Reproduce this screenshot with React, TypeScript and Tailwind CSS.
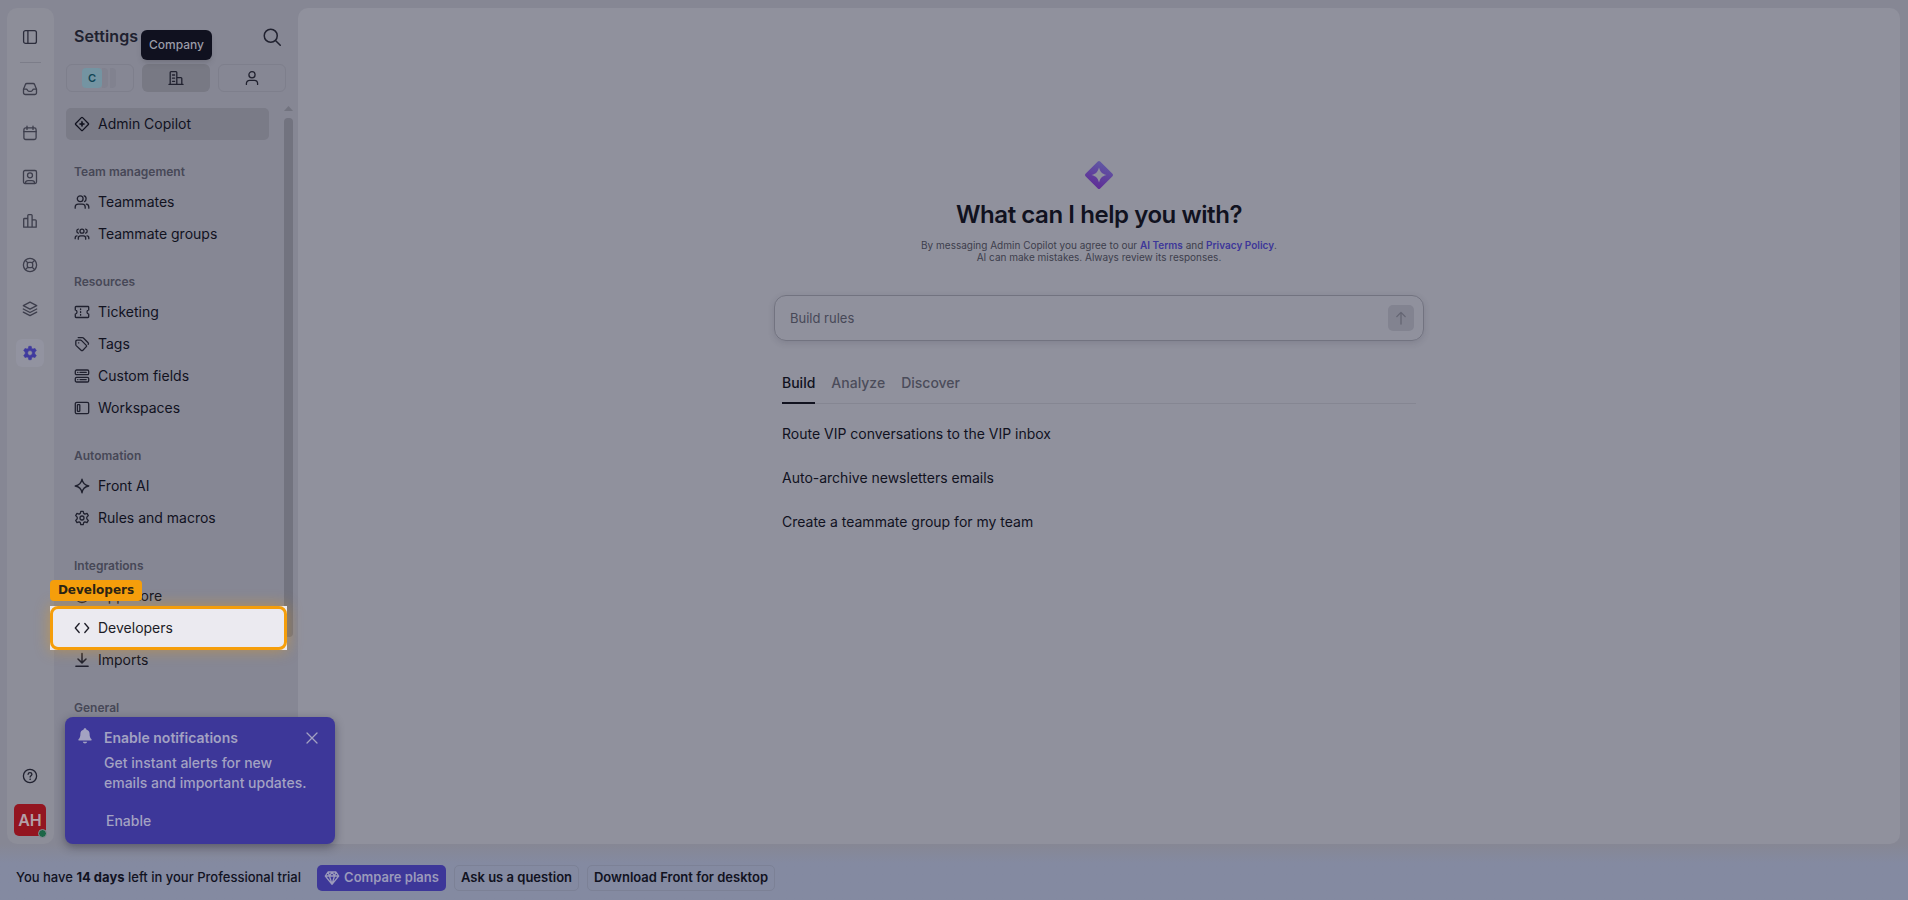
import type { ReactNode } from 'react';

type IconProps = { children: ReactNode; className?: string; size?: number };

const Icon = ({ children, className = '', size = 16 }: IconProps) => (
  <svg
    width={size}
    height={size}
    viewBox="0 0 16 16"
    fill="none"
    stroke="currentColor"
    strokeWidth="1.3"
    strokeLinecap="round"
    strokeLinejoin="round"
    className={`shrink-0 ${className}`}
  >
    {children}
  </svg>
);

const gearPath =
  'M6.8 1.300h2.400l.5 2.100 1.200.7 2.100-.7 1.300 2.200-1.500 1.500v1.800l1.500 1.500-1.300 2.200-2.100-.7-1.200.7-.5 2.100H6.800l-.5-2.100-1.200-.7-2.100.7-1.300-2.200 1.500-1.500V7.100L1.700 5.600 3 3.400l2.100.7 1.200-.7z';

const icons = {
  panel: (
    <>
      <rect x="1.6" y="1.6" width="12.8" height="12.8" rx="2" />
      <path d="M5.9 1.6v12.8" />
    </>
  ),
  inbox: (
    <>
      <path d="M1.5 8.3 3.4 3.5a1.6 1.6 0 0 1 1.5-1h6.2a1.6 1.6 0 0 1 1.5 1l1.9 4.8v3.4a1.8 1.8 0 0 1-1.8 1.8H3.3a1.8 1.8 0 0 1-1.8-1.8z" />
      <path d="M1.6 8.2h2.6c.7 0 1 .4 1.3 1 .4.8 1.2 1.2 2.5 1.2s2.1-.4 2.5-1.2c.3-.6.6-1 1.3-1h2.6" />
    </>
  ),
  calendar: (
    <>
      <rect x="1.9" y="2.9" width="12.2" height="11.6" rx="1.8" />
      <path d="M1.9 6.7h12.2M5 1.2v3.2M11 1.2v3.2" />
    </>
  ),
  contact: (
    <>
      <rect x="1.5" y="1.5" width="13" height="13" rx="1.5" />
      <circle cx="8" cy="6.3" r="2.5" />
      <path d="M3.3 14.2c.2-1.8 1.3-2.6 2.7-2.6h4c1.4 0 2.5.8 2.7 2.6" />
    </>
  ),
  chart: (
    <path d="M1.7 14.2V6.3c0-.5.3-.8.8-.8h3.3v8.7zM5.8 14.2V2.6c0-.6.3-.9.9-.9h2.5c.6 0 .9.3.9.9v11.6zM10.1 6.9h3.2c.6 0 .9.3.9.9v6.4h-4.1z" />
  ),
  lifebuoy: (
    <>
      <circle cx="8" cy="8" r="6.6" />
      <rect x="5.3" y="5.3" width="5.4" height="5.4" rx="1.6" />
      <path d="m3.4 3.4 2.4 2.4M12.6 3.4l-2.4 2.4M3.4 12.6l2.4-2.4M12.6 12.6l-2.4-2.4" />
    </>
  ),
  layers: (
    <>
      <path d="M8 1.2 14.7 4.7 8 8.2 1.3 4.7z" />
      <path d="m1.3 8 6.7 3.5L14.7 8M1.3 11.1 8 14.6l6.7-3.5" />
    </>
  ),
  help: (
    <>
      <circle cx="8" cy="8" r="6.6" />
      <path d="M6.1 6.3c.1-1 .9-1.6 1.9-1.6s1.9.7 1.9 1.6c0 1.3-1.8 1.4-1.8 2.7" />
      <circle cx="8.05" cy="11.2" r=".4" fill="currentColor" strokeWidth=".6" />
    </>
  ),
  building: (
    <>
      <path d="M1 14.4h14M2.2 14.4V2.6c0-.6.3-.9.9-.9h4.8c.6 0 .9.3.9.9v11.8M8.8 7.7h4.1c.6 0 .9.3.9.9v5.8" />
      <path d="M4.5 5h2.1M4.5 8.2h2.1M4.5 11.3h2.1" />
    </>
  ),
  person: (
    <>
      <circle cx="8" cy="4.8" r="3.1" />
      <path d="M2.4 14.4v-.9a3.2 3.2 0 0 1 3.2-3.2h4.8a3.2 3.2 0 0 1 3.2 3.2v.9" />
    </>
  ),
  copilot: (
    <>
      <rect x="3.1" y="3.1" width="9.8" height="9.8" rx=".8" transform="rotate(45 8 8)" />
      <path d="M8 5.3 8.8 7.2 10.7 8l-1.9.8L8 10.7l-.8-1.9L5.3 8l1.9-.8z" fill="currentColor" strokeWidth=".6" />
    </>
  ),
  teammates: (
    <>
      <circle cx="6.2" cy="4.7" r="2.9" />
      <path d="M1.2 14.2v-1.1a3 3 0 0 1 3-3h4a3 3 0 0 1 3 3v1.1M10.1 1.8c2.6.4 2.6 5 .4 5.8M12.3 10.2c1.6.2 2.5 1.3 2.5 2.9v1.1" />
    </>
  ),
  groups: (
    <>
      <circle cx="8" cy="5.2" r="2" />
      <path d="M4.3 13.2v-1.1c0-1.4.9-2.3 2.2-2.3h3c1.3 0 2.2.9 2.2 2.3v1.1M4.4 3.1c-2.1 0-2.1 3.9 0 4M11.6 3.1c2.1 0 2.1 3.9 0 4M1.2 12.7v-.8c0-1.2.7-2 1.8-2M14.8 12.7v-.8c0-1.2-.7-2-1.8-2" />
    </>
  ),
  ticket: (
    <>
      <path d="M1.3 3.2c0-.4.3-.7.7-.7h12c.4 0 .7.3.7.7v2.7c-2.3.4-2.3 3.8 0 4.2v2.7c0 .4-.3.7-.7.7H2a.7.7 0 0 1-.7-.7v-2.7c2.3-.4 2.3-3.8 0-4.2z" />
      <path d="M6.6 4.8v.7M6.6 7.6v.8M6.6 10.5v.7" />
    </>
  ),
  tags: (
    <>
      <path d="M1.8 5.7c0-1 .5-1.5 1.5-1.5h3.3c.4 0 .7.1 1 .4l4.5 4.5c.6.6.6 1.2 0 1.8l-3.2 3.3c-.6.6-1.2.6-1.8 0L2.2 9.6a1.4 1.4 0 0 1-.4-1z" />
      <path d="M4.2 1.6h4.2c.4 0 .7.1 1 .4l4.7 4.7c.5.5.5 1.1.1 1.6" />
      <circle cx="4.6" cy="6.9" r=".3" fill="currentColor" strokeWidth=".5" />
    </>
  ),
  fields: (
    <>
      <rect x="1.3" y="2" width="13.4" height="4.7" rx="1.3" />
      <rect x="1.3" y="9.3" width="13.4" height="4.7" rx="1.3" />
      <path d="M3.7 4.4h.2M6 4.4h6.2M3.7 11.6h.2M6 11.6h6.2" />
    </>
  ),
  workspace: (
    <>
      <rect x="1.3" y="2.3" width="13.4" height="11.4" rx="1.5" />
      <rect x="3.4" y="4.6" width="2.4" height="6.8" rx=".6" />
    </>
  ),
  sparkle: <path d="M8 1.2c.7 4.3 2.5 6.1 6.8 6.8-4.3.7-6.1 2.5-6.8 6.8C7.3 10.5 5.5 8.7 1.2 8 5.5 7.3 7.3 5.5 8 1.2z" />,
  gear: (
    <>
      <path d={gearPath} />
      <circle cx="8" cy="8" r="2" />
    </>
  ),
  store: <circle cx="8" cy="8" r="6.5" />,
  code: <path d="M5.2 3.5 1.3 8l3.9 4.5M10.8 3.5 14.7 8l-3.9 4.5" />,
  download: <path d="M8 1.5v9M4 7l4 3.9L12 7M1.9 14.2h12.2" strokeWidth="1.5" />,
};

type IconName = keyof typeof icons;

const railIcons: IconName[] = ['inbox', 'calendar', 'contact', 'chart', 'lifebuoy', 'layers'];

const sections: { title: string; items: { label: string; icon: IconName }[] }[] = [
  {
    title: 'Team management',
    items: [
      { label: 'Teammates', icon: 'teammates' },
      { label: 'Teammate groups', icon: 'groups' },
    ],
  },
  {
    title: 'Resources',
    items: [
      { label: 'Ticketing', icon: 'ticket' },
      { label: 'Tags', icon: 'tags' },
      { label: 'Custom fields', icon: 'fields' },
      { label: 'Workspaces', icon: 'workspace' },
    ],
  },
  {
    title: 'Automation',
    items: [
      { label: 'Front AI', icon: 'sparkle' },
      { label: 'Rules and macros', icon: 'gear' },
    ],
  },
  {
    title: 'Integrations',
    items: [
      { label: 'App store', icon: 'store' },
      { label: 'Developers', icon: 'code' },
      { label: 'Imports', icon: 'download' },
    ],
  },
  { title: 'General', items: [] },
];

const suggestions = [
  'Route VIP conversations to the VIP inbox',
  'Auto-archive newsletters emails',
  'Create a teammate group for my team',
];

const Rail = () => (
  <nav className="flex w-[47px] shrink-0 flex-col items-center rounded-[10px] bg-[#8d8e99] pt-[21px] pr-px pb-2 text-[#3d3e4c]">
    <Icon className="text-[#2c2d3c]">{icons.panel}</Icon>
    <div className="mt-[17px] h-px w-[21px] bg-[#7c7d89]" />
    <div className="mt-[18px] flex flex-col gap-7">
      {railIcons.map((name) => (
        <Icon key={name}>{icons[name]}</Icon>
      ))}
    </div>
    <div className="mt-[22px] flex size-7 items-center justify-center rounded-md bg-[#9293a0] text-[#403a9e]">
      <svg width="16" height="16" viewBox="0 0 16 16">
        <path
          d={`${gearPath}M8 5.6a2.4 2.4 0 1 0 0 4.8 2.4 2.4 0 0 0 0-4.8z`}
          fill="currentColor"
          fillRule="evenodd"
          stroke="currentColor"
          strokeWidth=".6"
          strokeLinejoin="round"
        />
      </svg>
    </div>
    <Icon className="mt-auto text-[#20212f]">{icons.help}</Icon>
    <div className="relative mt-5 flex size-8 items-center justify-center rounded-[5px] bg-[#931520] text-base font-semibold text-[#b3a0a8]">
      AH
      <span className="absolute -right-px -bottom-[2px] size-[9px] rounded-full border border-[#8d8e99] bg-[#1c6647]" />
    </div>
  </nav>
);

const Sidebar = () => (
  <aside className="flex w-[244px] shrink-0 flex-col overflow-hidden">
    <div className="flex h-14 items-center justify-between pr-4 pl-5">
      <h2 className="text-base font-semibold tracking-[0.1px] text-[#20212f]">Settings</h2>
      <Icon size={20} className="mt-px text-[#20212f]">
        <circle cx="7" cy="7" r="5.2" strokeWidth="1.2" />
        <path d="m11 11 3.6 3.6" strokeWidth="1.2" />
      </Icon>
    </div>
    <div className="flex gap-2 pl-3 text-[#20212f]">
      <div className="flex h-7 w-[68px] items-center justify-center rounded-md border border-[#7e7f8c] pr-0.5">
        <span className="flex size-5 items-center justify-center rounded bg-[#7494a2] text-[11px] font-semibold text-[#114555]">C</span>
        <span className="h-5 w-1.5 rounded-r bg-[#81828f]" />
        <span className="ml-0.5 h-5 w-1.5 rounded-r bg-[#81828f]" />
      </div>
      <div className="flex h-7 w-[68px] items-center justify-center rounded-md bg-[#787984]">
        <Icon>{icons.building}</Icon>
      </div>
      <div className="flex h-7 w-[68px] items-center justify-center rounded-md border border-[#7e7f8c]">
        <Icon>{icons.person}</Icon>
      </div>
    </div>
    <div className="mt-2 flex min-h-0 flex-1">
      <div className="min-w-0 flex-1 overflow-hidden pt-2 pl-3">
        <div className="flex h-8 w-[203px] items-center gap-2 rounded-[5px] bg-[#7a7b87] pl-2 text-sm text-[#11121f]">
          <Icon>{icons.copilot}</Icon>
          Admin Copilot
        </div>
        {sections.map((section) => (
          <div key={section.title}>
            <h3 className="pt-6 pb-1.5 pl-2 text-xs leading-4 font-semibold text-[#474857]">{section.title}</h3>
            {section.items.map((item) => (
              <div key={item.label} className="flex h-8 items-center gap-2 pl-2 text-sm text-[#11121f]">
                <Icon className="text-[#20212f]">{icons[item.icon]}</Icon>
                {item.label}
              </div>
            ))}
          </div>
        ))}
      </div>
      {/* Scrollbar */}
      <div className="mr-[5px] flex w-[9px] flex-col items-center pt-1.5">
        <svg width="9" height="5" viewBox="0 0 9 5">
          <path d="M0 5 4.5 0 9 5z" fill="#72737f" />
        </svg>
        <div className="mt-[7px] h-[519px] w-[9px] rounded-[4px] bg-[#72737f]" />
      </div>
    </div>
  </aside>
);

const Copilot = () => (
  <main className="flex flex-1 flex-col items-center rounded-[10px] bg-[#90919d] pt-[152px]">
    <svg width="30" height="30" viewBox="0 0 30 30">
      <defs>
        <linearGradient id="logo" x1="20" y1="2" x2="10" y2="28" gradientUnits="userSpaceOnUse">
          <stop stopColor="#605aa4" />
          <stop offset="1" stopColor="#5f2a96" />
        </linearGradient>
      </defs>
      <path
        d="M13.8 1.5a1.7 1.7 0 0 1 2.4 0l12.3 12.3a1.7 1.7 0 0 1 0 2.4L16.2 28.5a1.7 1.7 0 0 1-2.4 0L1.5 16.2a1.7 1.7 0 0 1 0-2.4zM15 7.5c-.8 2.700-1.700 4.100-2.500 5S10.200 14.200 7.500 15c2.700.8 4.100 1.600 5 2.500s1.700 2.300 2.500 5c.8-2.700 1.600-4.100 2.500-5s2.300-1.700 5-2.500c-2.700-.8-4.100-1.600-5-2.500S15.800 10.200 15 7.500z"
        fill="url(#logo)"
        fillRule="evenodd"
      />
    </svg>
    <h1 className="mt-[9px] text-2xl leading-8 font-semibold tracking-[-0.43px] text-[#11121f]">What can I help you with?</h1>
    <p className="mt-2 text-center text-[10px] leading-3 text-[#3d3e4c]">
      By messaging Admin Copilot you agree to our <span className="font-semibold text-[#3d3799]">AI Terms</span> and{' '}
      <span className="font-semibold text-[#3d3799]">Privacy Policy</span>.
      <br />
      AI can make mistakes. Always review its responses.
    </p>
    <div className="mt-8 flex h-[46px] w-[650px] items-center justify-between rounded-xl border border-[#727380] pr-[9px] pl-[15px] shadow-[0_2px_6px_rgba(40,40,60,0.15)]">
      <span className="pt-0.5 text-[13px] text-[#474857]">Build rules</span>
      <div className="flex size-[26px] items-center justify-center rounded-[5px] bg-[#828390] text-[#646572]">
        <Icon>
          <path d="M8 14V2.5M3.8 6.6 8 2.4l4.2 4.2" />
        </Icon>
      </div>
    </div>
    <div className="mt-7 w-[634px]">
      <div className="flex gap-4 border-b border-[#858692] text-sm font-medium text-[#4b4c5a]">
        <span className="-mb-px border-b-2 border-[#11121f] pt-1 pb-[9px] text-[#11121f]">Build</span>
        <span className="pt-1">Analyze</span>
        <span className="pt-1">Discover</span>
      </div>
      <ul className="mt-2 text-sm text-[#11121f]">
        {suggestions.map((text) => (
          <li key={text} className="flex h-11 items-center">
            {text}
          </li>
        ))}
      </ul>
    </div>
  </main>
);

const TrialBar = () => (
  <footer className="flex h-14 items-center gap-2 bg-linear-to-b from-[#868794] to-[#848aa1] to-35% pt-[11px] pl-4 text-[13px] font-semibold text-[#11121f]">
    <span className="mr-2 w-[285px] font-medium whitespace-nowrap">
      You have <b className="font-bold">14 days</b> left in your Professional trial
    </span>
    <div className="flex h-[26px] w-[129px] items-center justify-center gap-1 rounded-[5px] bg-[#3d3799] whitespace-nowrap text-[#9b9abb]">
      <Icon>
        <path d="M4 2h8l2.7 4L8 14.3 1.3 6zM1.3 6h13.4M4 2l1.5 4L8 14.3 10.5 6 12 2M5.5 6 8 2l2.5 4" />
      </Icon>
      Compare plans
    </div>
    <div className="flex h-[26px] w-[125px] items-center justify-center rounded-[5px] border border-[#7c8196] whitespace-nowrap">Ask us a question</div>
    <div className="flex h-[26px] w-[188px] items-center justify-center rounded-[5px] border border-[#7c8196] whitespace-nowrap">Download Front for desktop</div>
  </footer>
);

const Notification = () => (
  <div className="absolute top-[717px] left-[65px] flex h-[127px] w-[270px] gap-[11px] rounded-lg bg-[#3d3799] pt-[11px] pr-[15px] pl-3 text-sm font-medium text-[#a3a2c2] shadow-[0_3px_10px_rgba(20,20,40,0.4)]">
    <svg width="16" height="16" viewBox="0 0 16 16" fill="currentColor" className="shrink-0">
      <path d="M8 .2c.8 0 1.3.5 1.3 1.2 2 .6 3.3 2.2 3.3 4.3 0 3 .6 4.2 1.7 5.2.6.6.4 1.7-.6 1.7H2.3c-1 0-1.2-1.1-.6-1.7 1.1-1 1.7-2.2 1.7-5.2 0-2.1 1.3-3.7 3.3-4.3C6.7.7 7.2.2 8 .2zM5.8 13.7h4.4c-.3 1-1.1 1.7-2.2 1.7s-1.900-.7-2.200-1.700z" />
    </svg>
    <div className="flex-1 leading-5">
      <div className="flex h-5 items-center justify-between whitespace-nowrap">
        <span className="font-semibold">Enable notifications</span>
        <Icon>
          <path d="m3 3 10 10M13 3 3 13" />
        </Icon>
      </div>
      <p className="mt-[5px] whitespace-nowrap">
        Get instant alerts for new
        <br />
        emails and important updates.
      </p>
      <p className="mt-[18px] pl-0.5">Enable</p>
    </div>
  </div>
);

// Guided-tour marker around the Developers entry
const Highlight = () => (
  <>
    <div className="absolute top-[606px] left-[50px] h-11 w-[237px] bg-[#ebeaf0] shadow-[0_0_15px_rgba(245,158,11,0.45)]">
      <div className="flex h-full items-center gap-2 rounded-lg border-3 border-[#f59e0b] pl-[21px] text-sm text-[#1c1c26]">
        <Icon>{icons.code}</Icon>
        Developers
      </div>
    </div>
    <div className="absolute top-[580px] left-[50px] flex h-[21px] w-[92px] items-center justify-center rounded bg-[#f59e0b] pb-0.5 font-['DejaVu_Sans',sans-serif] text-xs font-bold text-[#2b2415]">
      Developers
    </div>
  </>
);

export default function App() {
  return (
    <div className="relative flex h-screen flex-col overflow-hidden bg-[#868794] font-['Inter',sans-serif]">
      <div className="flex h-[844px] pt-2 pr-2 pl-[7px]">
        <Rail />
        <Sidebar />
        <Copilot />
      </div>
      <TrialBar />
      <div className="absolute top-[30px] left-[141px] flex h-[30px] w-[71px] items-center justify-center rounded-md bg-[#10111f] text-xs font-medium text-[#9a9ba7] shadow-md">
        Company
      </div>
      <Highlight />
      <Notification />
    </div>
  );
}
